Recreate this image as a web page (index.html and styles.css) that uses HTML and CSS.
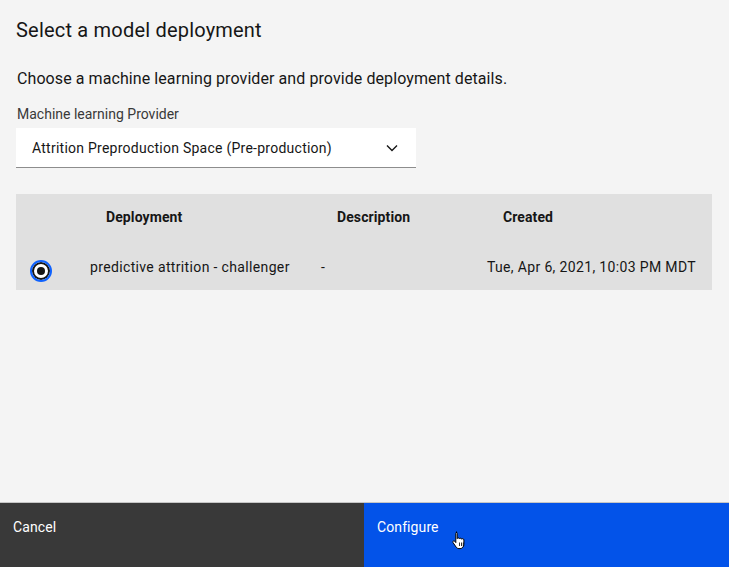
FILE: index.html
```html
<!DOCTYPE html>
<html lang="en">
<head>
<meta charset="utf-8">
<title>Select a model deployment</title>
<link rel="stylesheet" href="styles.css">
</head>
<body>
<div class="modal">
  <div class="content">
    <h1 class="title">Select a model deployment</h1>
    <p class="intro">Choose a machine learning provider and provide deployment details.</p>
    <label class="label">Machine learning Provider</label>
    <div class="select">
      <span>Attrition Preproduction Space (Pre-production)</span>
      <svg class="chev" width="12" height="8" viewBox="0 0 12 8"><path d="M1 1.5 L6 6.5 L11 1.5" fill="none" stroke="#161616" stroke-width="1.4"/></svg>
    </div>
    <div class="table">
      <div class="row head">
        <div class="c-radio"></div>
        <div class="c-dep">Deployment</div>
        <div class="c-desc">Description</div>
        <div class="c-created">Created</div>
      </div>
      <div class="row data">
        <div class="c-radio"><span class="radio"><span class="dot"></span></span></div>
        <div class="c-dep2">predictive attrition - challenger</div>
        <div class="c-desc2">-</div>
        <div class="c-created2">Tue, Apr 6, 2021, 10:03 PM MDT</div>
      </div>
    </div>
  </div>
  <div class="footer">
    <button class="btn cancel">Cancel</button>
    <button class="btn primary">Configure
      <svg class="cursor" width="14" height="19" viewBox="0 0 14 19"><path d="M4 1.2c.8 0 1.2.5 1.2 1.2v5.2c.2-.5.7-.7 1.2-.7.6 0 1 .4 1.1.9.2-.4.6-.6 1.1-.6.6 0 1 .4 1.1 1 .2-.3.6-.5 1-.5.7 0 1.2.5 1.2 1.2v4.4c0 2.3-1.6 4.3-3.8 4.3H7c-1.3 0-2.2-.6-2.9-1.6L1 11.6c-.4-.6-.2-1.3.4-1.6.5-.3 1.1-.1 1.5.4l.9 1.2V2.4c0-.7.4-1.2 1.2-1.2z" fill="#fff" stroke="#000" stroke-width="1"/><path d="M7.5 11.5v3.5M9.5 11.5v3.5M11.3 11.5v3.5" stroke="#000" stroke-width=".8"/></svg>
    </button>
  </div>
</div>
</body>
</html>
```
FILE: styles.css
```css
* { box-sizing: border-box; }
html, body { margin: 0; padding: 0; }
body {
  width: 729px;
  height: 567px;
  background: #f4f4f4;
  font-family: Roboto, "Liberation Sans", sans-serif;
  color: #161616;
  overflow: hidden;
}
.modal {
  height: 567px;
  display: flex;
  flex-direction: column;
}
.content {
  flex: 1;
  padding: 16px 17px 0 16px;
  display: flex;
  flex-direction: column;
  align-items: flex-start;
}
.title {
  margin: 0;
  font-size: 20px;
  font-weight: 400;
  line-height: 28px;
  letter-spacing: 0.2px;
}
.intro {
  margin: 23px 0 0 1px;
  font-size: 16px;
  line-height: 24px;
  letter-spacing: 0.08px;
}
.label {
  margin: 13px 0 0 1px;
  font-size: 14px;
  line-height: 20px;
  color: #393939;
}
.select {
  margin-top: 4px;
  width: 400px;
  height: 40px;
  background: #fff;
  border-bottom: 1px solid #8d8d8d;
  display: flex;
  align-items: center;
  justify-content: space-between;
  padding: 0 18px 0 16px;
  font-size: 14px;
  letter-spacing: 0.25px;
}
.chev { display: block; }
.table {
  margin-top: 26px;
  background: #e0e0e0;
  width: 696px;
}
.row {
  display: flex;
  align-items: center;
  font-size: 14px;
  letter-spacing: 0.1px;
}
.head { height: 46px; font-weight: 700; }
.data { height: 50px; padding-top: 4px; letter-spacing: 0.35px; }
.c-radio { width: 50px; display: flex; justify-content: center; }
.c-dep { width: 271px; padding-left: 40px; }
.c-desc { width: 166px; }
.c-created { flex: 1; }
.c-dep2 { width: 255px; padding-left: 24px; white-space: nowrap; }
.c-desc2 { width: 100px; }
.c-created2 { flex: 1; text-align: right; padding-right: 16px; white-space: nowrap; }
.radio {
  margin-top: 8px;
  width: 22px;
  height: 22px;
  border-radius: 50%;
  border: 2px solid #0f62fe;
  background: #fff;
  box-shadow: inset 0 0 0 2px #161616;
  display: flex;
  align-items: center;
  justify-content: center;
}
.dot {
  width: 8px;
  height: 8px;
  border-radius: 50%;
  background: #161616;
}
.footer {
  height: 65px;
  display: flex;
  border-top: 1px solid #c6c6c6;
}
.btn {
  border: 0;
  margin: 0;
  font-family: inherit;
  font-size: 14px;
  letter-spacing: 0.1px;
  color: #fff;
  text-align: left;
  padding: 16px 13px;
  position: relative;
  height: 100%;
  display: flex;
  align-items: flex-start;
}
.cancel { background: #393939; width: 364px; }
.primary { background: #0353e9; flex: 1; }
.cursor { position: absolute; left: 88px; top: 28px; }
```
